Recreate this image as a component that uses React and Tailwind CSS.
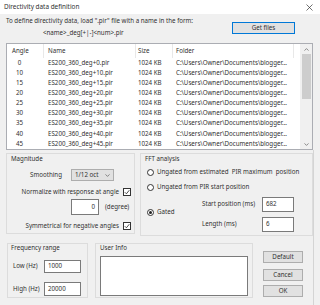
const rows = [0, 10, 15, 20, 25, 30, 35, 40, 45];

function Check() {
  return (
    <div className="w-[8px] h-[8px] border border-[#333] bg-white flex items-center justify-center">
      <svg width="6" height="6" viewBox="0 0 6 6">
        <path d="M0.8 3.2 L2.4 4.8 L5.3 1.2" stroke="#222" strokeWidth="0.8" fill="none" />
      </svg>
    </div>
  );
}

function Radio({ on }) {
  return (
    <div className="w-[7px] h-[7px] rounded-full border border-[#333] bg-white flex items-center justify-center shrink-0">
      {on && <div className="w-[3px] h-[3px] rounded-full bg-[#222]" />}
    </div>
  );
}

function Input({ w, h, value, right }) {
  return (
    <div
      className={`${w} ${h} bg-white border border-[#7a7a7a] flex items-center px-[3px] ${right ? "justify-end" : ""}`}
    >
      {value}
    </div>
  );
}

function Btn({ children }) {
  return (
    <div className="w-[40px] h-[12px] bg-[#e1e1e1] border border-[#adadad] flex items-center justify-center">
      {children}
    </div>
  );
}

export default function App() {
  return (
    <div className="w-[320px] h-[305px] overflow-hidden bg-[#f0f0f0] text-[#303030] text-[6.2px] leading-none font-['Noto_Sans',sans-serif] flex flex-col">
      {/* title bar */}
      <div className="h-[14px] shrink-0 bg-white flex items-center justify-between pl-[4px] pr-[7px]">
        <span className="text-[6.4px]">Directivity data definition</span>
        <svg width="7" height="7" viewBox="0 0 7 7">
          <path d="M0.5 0.5 L6.5 6.5 M6.5 0.5 L0.5 6.5" stroke="#333" strokeWidth="0.7" />
        </svg>
      </div>

      {/* instructions */}
      <div className="h-[29px] shrink-0 flex">
        <div className="w-[226px] pl-[6px] pt-[2px] flex flex-col">
          <div className="h-[10px] flex items-center">
            To define directivity data, load ".pir" file with a name in the form:
          </div>
          <div className="h-[10px] mt-[2px] flex items-center pl-[37px]">
            &lt;name&gt;_deg[+|-]&lt;num&gt;.pir
          </div>
        </div>
        <div className="mt-[8px] ml-[6px] w-[63px] h-[12px] bg-[#e1e1e1] border border-[#0078d7] flex items-center justify-center">
          Get files
        </div>
      </div>

      {/* list */}
      <div className="ml-[6px] shrink-0 w-[307px] h-[107px] bg-white border border-[#abadb3] flex">
        <div className="flex-1 flex flex-col">
          <div className="h-[14px] flex items-center">
            <div className="w-[37px] h-full flex items-center pl-[5px] border-r border-[#e8e8e8]">Angle</div>
            <div className="w-[92px] h-full flex items-center pl-[4px] border-r border-[#e8e8e8]">Name</div>
            <div className="w-[37px] h-full flex items-center pl-[2px] border-r border-[#e8e8e8]">Size</div>
            <div className="w-[121px] h-full flex items-center pl-[3px] border-r border-[#e8e8e8]">Folder</div>
          </div>
          {rows.map((a) => (
            <div key={a} className="h-[10.4px] flex items-center">
              <div className="w-[37px] flex justify-center pr-[12px]">{a}</div>
              <div className="w-[92px] pl-[4px]">ES200_360_deg+{a}.pir</div>
              <div className="w-[37px] pl-[2px]">1024 KB</div>
              <div className="w-[121px] pl-[3px]">C:\Users\Owner\Documents\blogger...</div>
            </div>
          ))}
        </div>
        <div className="w-[12px] bg-[#f0f0f0] flex flex-col items-center">
          <div className="h-[10px] flex items-center justify-center">
            <svg width="5" height="3" viewBox="0 0 5 3">
              <path d="M0.5 2.6 L2.5 0.6 L4.5 2.6" stroke="#606060" strokeWidth="0.7" fill="none" />
            </svg>
          </div>
          <div className="w-[9px] h-[45px] bg-[#cdcdcd]" />
          <div className="flex-1" />
          <div className="h-[10px] flex items-center justify-center">
            <svg width="5" height="3" viewBox="0 0 5 3">
              <path d="M0.5 0.4 L2.5 2.4 L4.5 0.4" stroke="#606060" strokeWidth="0.7" fill="none" />
            </svg>
          </div>
        </div>
      </div>

      {/* lower area with window edge line on the right */}
      <div className="ml-[6px] w-[308px] flex-1 border-r border-[#d4d4d4] flex flex-col">
        {/* middle row */}
        <div className="mt-[3px] flex gap-[5px] items-start">
          {/* Magnitude */}
          <div className="w-[129px] h-[81px] border border-[#dcdcdc] flex flex-col">
            <div className="h-[10px] flex items-center pl-[4px]">Magnitude</div>
            <div className="mt-[5px] h-[12px] flex items-center">
              <span className="ml-[23px] w-[41px]">Smoothing</span>
              <div className="w-[43px] h-[12px] bg-[#e1e1e1] border border-[#adadad] flex items-center justify-between px-[3px]">
                <span>1/12 oct</span>
                <svg width="5" height="3" viewBox="0 0 5 3">
                  <path d="M0.5 0.4 L2.5 2.4 L4.5 0.4" stroke="#444" strokeWidth="0.6" fill="none" />
                </svg>
              </div>
            </div>
            <div className="mt-[5px] h-[12px] flex items-center justify-end pr-[3px] gap-[4px]">
              <span>Normalize with response at angle</span>
              <Check />
            </div>
            <div className="mt-[1px] h-[16px] flex items-center">
              <div className="ml-[64px]">
                <Input w="w-[28px]" h="h-[16px]" value="0" right />
              </div>
              <span className="ml-[6px]">(degree)</span>
            </div>
            <div className="mt-[6px] h-[10px] flex items-center justify-end pr-[3px] gap-[4px]">
              <span>Symmetrical for negative angles</span>
              <Check />
            </div>
          </div>

          {/* FFT */}
          <div className="w-[173px] h-[83px] border border-[#dcdcdc] flex flex-col">
            <div className="h-[10px] flex items-center pl-[4px]">FFT analysis</div>
            <div className="mt-[3px] h-[10px] flex items-center pl-[6px] gap-[3px]">
              <Radio />
              <span>Ungated from estimated&nbsp; PIR maximum&nbsp; position</span>
            </div>
            <div className="mt-[5px] h-[10px] flex items-center pl-[6px] gap-[3px]">
              <Radio />
              <span>Ungated from PIR start position</span>
            </div>
            <div className="mt-[5px] flex">
              <div className="w-[61px] flex items-center pl-[6px] gap-[3px] pb-[5px]">
                <Radio on />
                <span>Gated</span>
              </div>
              <div className="flex flex-col gap-[5px]">
                <div className="h-[15px] flex items-center">
                  <span className="w-[60px]">Start position (ms)</span>
                  <Input w="w-[32px]" h="h-[15px]" value="682" />
                </div>
                <div className="h-[15px] flex items-center">
                  <span className="w-[60px]">Length (ms)</span>
                  <Input w="w-[32px]" h="h-[15px]" value="6" />
                </div>
              </div>
            </div>
          </div>
        </div>

        {/* bottom row */}
        <div className="mt-[7px] ml-[1px] flex items-start">
          <div className="w-[81px] h-[55px] border border-[#dcdcdc] flex flex-col">
            <div className="h-[8px] flex items-center pl-[3px]">Frequency range</div>
            <div className="mt-[8px] h-[13px] flex items-center">
              <span className="ml-[5px] w-[31px]">Low (Hz)</span>
              <Input w="w-[37px]" h="h-[13px]" value="1000" />
            </div>
            <div className="mt-[9px] h-[14px] flex items-center">
              <span className="ml-[5px] w-[31px]">High (Hz)</span>
              <Input w="w-[37px]" h="h-[14px]" value="20000" />
            </div>
          </div>
          <div className="ml-[7px] w-[158px] h-[55px] border border-[#dcdcdc] flex flex-col">
            <div className="h-[8px] flex items-center pl-[4px]">User Info</div>
            <div className="ml-[4px] mt-[4px] w-[148px] h-[40px] bg-white border border-[#7a7a7a]" />
          </div>
          <div className="ml-[10px] mt-[8px] flex flex-col">
            <Btn>Default</Btn>
            <div className="mt-[6px]">
              <Btn>Cancel</Btn>
            </div>
            <div className="mt-[4px]">
              <Btn>OK</Btn>
            </div>
          </div>
        </div>
      </div>
    </div>
  );
}
